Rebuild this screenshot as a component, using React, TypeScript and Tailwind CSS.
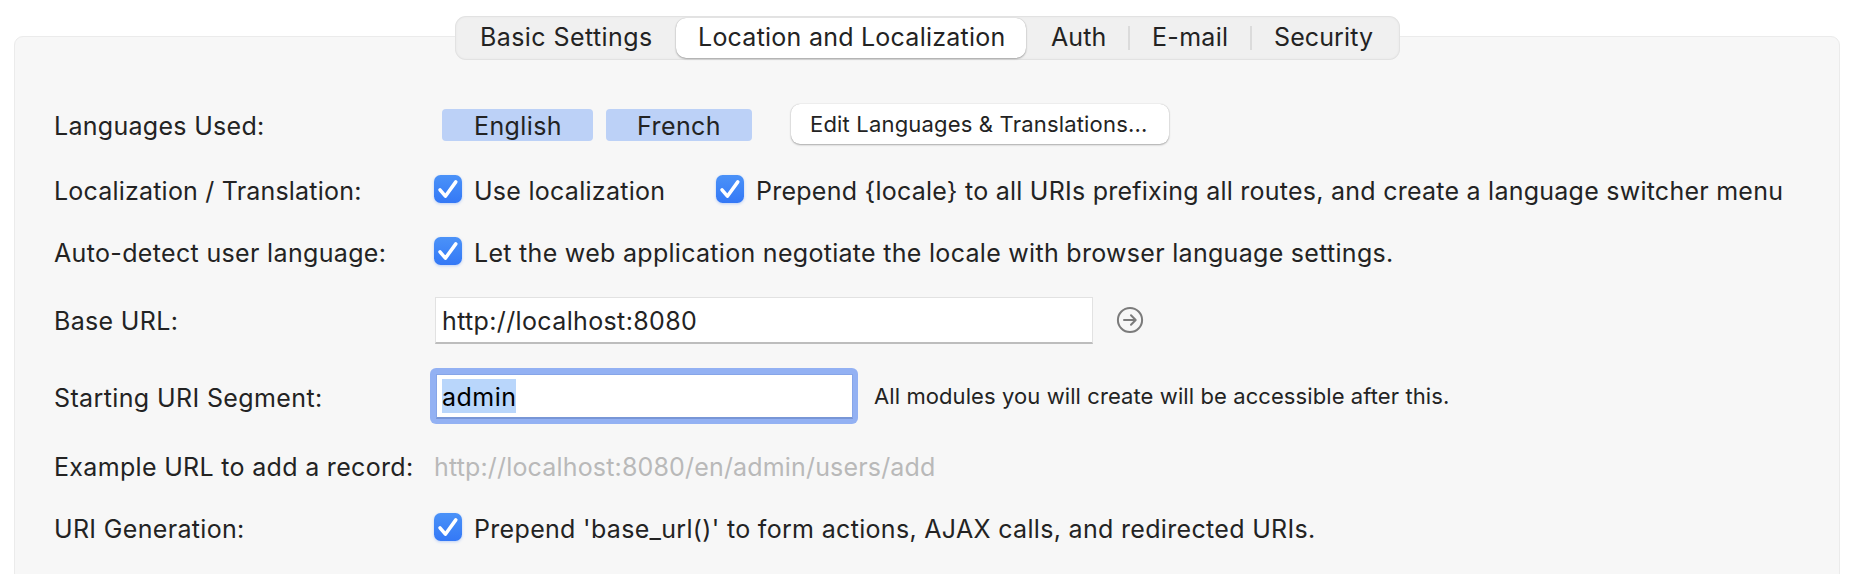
import type { ReactNode } from "react";

function Checkbox({ label, className }: { label: string; className: string }) {
  return (
    <label className="flex items-center">
      <span className="-mt-1 flex size-7 shrink-0 items-center justify-center rounded-[6.5px] bg-linear-to-b from-[#4b92f8] to-[#3478f6] shadow-[0_1px_3px_rgba(52,120,246,0.3)]">
        <svg viewBox="0 0 28 28" className="size-7" fill="none" stroke="white" strokeWidth="3.5" strokeLinecap="round" strokeLinejoin="round">
          <path d="M6 14.9 11.4 21.2 21.8 6.9" />
        </svg>
      </span>
      <span className={`ml-3 whitespace-nowrap ${className}`}>{label}</span>
    </label>
  );
}

function Row({ label, labelClass, height, children }: { label: string; labelClass: string; height: string; children: ReactNode }) {
  return (
    <div className={`flex items-center ${height}`}>
      <div className={`w-[380px] shrink-0 whitespace-nowrap ${labelClass}`}>{label}</div>
      {children}
    </div>
  );
}

function Tabs() {
  return (
    <div className="relative z-10 flex h-11 w-[945px] shrink-0 items-center rounded-[11px] bg-[#f0f0f0] shadow-[inset_0_0_3px_rgba(0,0,0,0.1),inset_0_0_0_1px_rgba(0,0,0,0.02)]">
      <div className="w-[221px] pb-0.5 pl-[25px] tracking-[0.42px]">Basic Settings</div>
      <div className="flex h-10 w-[350px] items-center rounded-[10px] bg-white pb-0.5 pl-[22px] tracking-[0.24px] shadow-[0_1px_2px_rgba(0,0,0,0.3),0_0_1px_rgba(0,0,0,0.25)]">
        Location and Localization
      </div>
      <div className="w-[102px] pb-0.5 pl-[25px] tracking-[0.1px]">Auth</div>
      <div className="h-6 w-0.5 bg-[#dbdbdb]" />
      <div className="w-[120px] pb-0.5 pl-[22px] tracking-[0.3px]">E-mail</div>
      <div className="h-6 w-0.5 bg-[#dbdbdb]" />
      <div className="pb-0.5 pl-[22px] tracking-[0.1px]">Security</div>
    </div>
  );
}

export default function App() {
  return (
    <div className="flex h-[574px] w-[1856px] flex-col items-center overflow-hidden bg-white pt-4 pr-px font-['Inter','Liberation_Sans',sans-serif] text-[25px] leading-8 text-[#232323]">
      <Tabs />
      <main className="-mt-6 mb-[-20px] ml-[-1px] w-[1826px] grow rounded-[9px] border border-[#ebebeb] bg-[#f7f7f7] pt-[57px] pl-[39px]">
        <Row label="Languages Used:" labelClass="tracking-[0.29px]" height="h-16">
          <div className="-mt-0.5 ml-2 flex h-8 w-[151px] items-center justify-center rounded bg-[#bcd1f7] pt-0.5 pl-px tracking-[0.4px]">English</div>
          <div className="-mt-0.5 ml-[13px] flex h-8 w-[146px] items-center justify-center rounded bg-[#bcd1f7] pt-0.5 tracking-[0.4px]">French</div>
          <button className="-mt-1 ml-[39px] flex h-10 w-[378px] items-center rounded-[9px] bg-white pl-[19px] text-[22px] tracking-[0.18px] whitespace-nowrap shadow-[0_1px_2px_rgba(0,0,0,0.3),0_0_1px_rgba(0,0,0,0.25)]">
            Edit Languages &amp; Translations...
          </button>
        </Row>
        <Row label="Localization / Translation:" labelClass="pt-0.5 tracking-[0.2px]" height="h-16">
          <div className="w-[282px] pt-0.5">
            <Checkbox label="Use localization" className="tracking-[0.27px]" />
          </div>
          <div className="pt-0.5">
            <Checkbox
              label="Prepend {locale} to all URIs prefixing all routes, and create a language switcher menu"
              className="tracking-[0.245px]"
            />
          </div>
        </Row>
        <Row label="Auto-detect user language:" labelClass="tracking-[0.34px]" height="h-[62px]">
          <Checkbox
            label="Let the web application negotiate the locale with browser language settings."
            className="tracking-[0.295px]"
          />
        </Row>
        <Row label="Base URL:" labelClass="tracking-[0.33px]" height="h-[74px]">
          <div className="-mt-0.5 ml-px flex h-[47px] w-[658px] items-center border border-b-2 border-[#e2e2e2] border-b-[#bdbdbd] bg-white pt-0.5 pl-[6px] tracking-[0.36px]">
            http://localhost:8080
          </div>
          <svg viewBox="0 0 28 28" className="-mt-0.5 ml-[23px] size-7" fill="none" stroke="#7b7b7b" strokeWidth="2" strokeLinecap="round" strokeLinejoin="round">
            <circle cx="14" cy="14" r="12.1" />
            <path d="M8 14h11.6M15 9.3 19.7 14 15 18.7" />
          </svg>
        </Row>
        <Row label="Starting URI Segment:" labelClass="pt-0.5 tracking-[0.38px]" height="h-[78px]">
          <div className="-mt-[3px] -ml-1 h-14 w-[428px] shrink-0 rounded-md bg-[#93b1f3] p-[6px] pr-[5px]">
            <div className="flex h-[45px] items-center border border-b-2 border-[#86a5e8] border-b-[#7896d6] bg-white pt-px pl-[5px] text-black">
              <span className="flex h-[34px] w-[74px] items-center bg-[#b9d6fb] pt-0.5 tracking-[0.5px]">admin</span>
            </div>
          </div>
          <div className="-mt-0.5 ml-4 text-[22px] tracking-[0.09px]">All modules you will create will be accessible after this.</div>
        </Row>
        <Row label="Example URL to add a record:" labelClass="tracking-[0.32px]" height="h-[62px]">
          <div className="tracking-[0.167px] text-[#b9b9b9]">http://localhost:8080/en/admin/users/add</div>
        </Row>
        <Row label="URI Generation:" labelClass="tracking-[0.33px]" height="h-[62px]">
          <Checkbox
            label="Prepend 'base_url()' to form actions, AJAX calls, and redirected URIs."
            className="tracking-[0.32px]"
          />
        </Row>
      </main>
    </div>
  );
}
